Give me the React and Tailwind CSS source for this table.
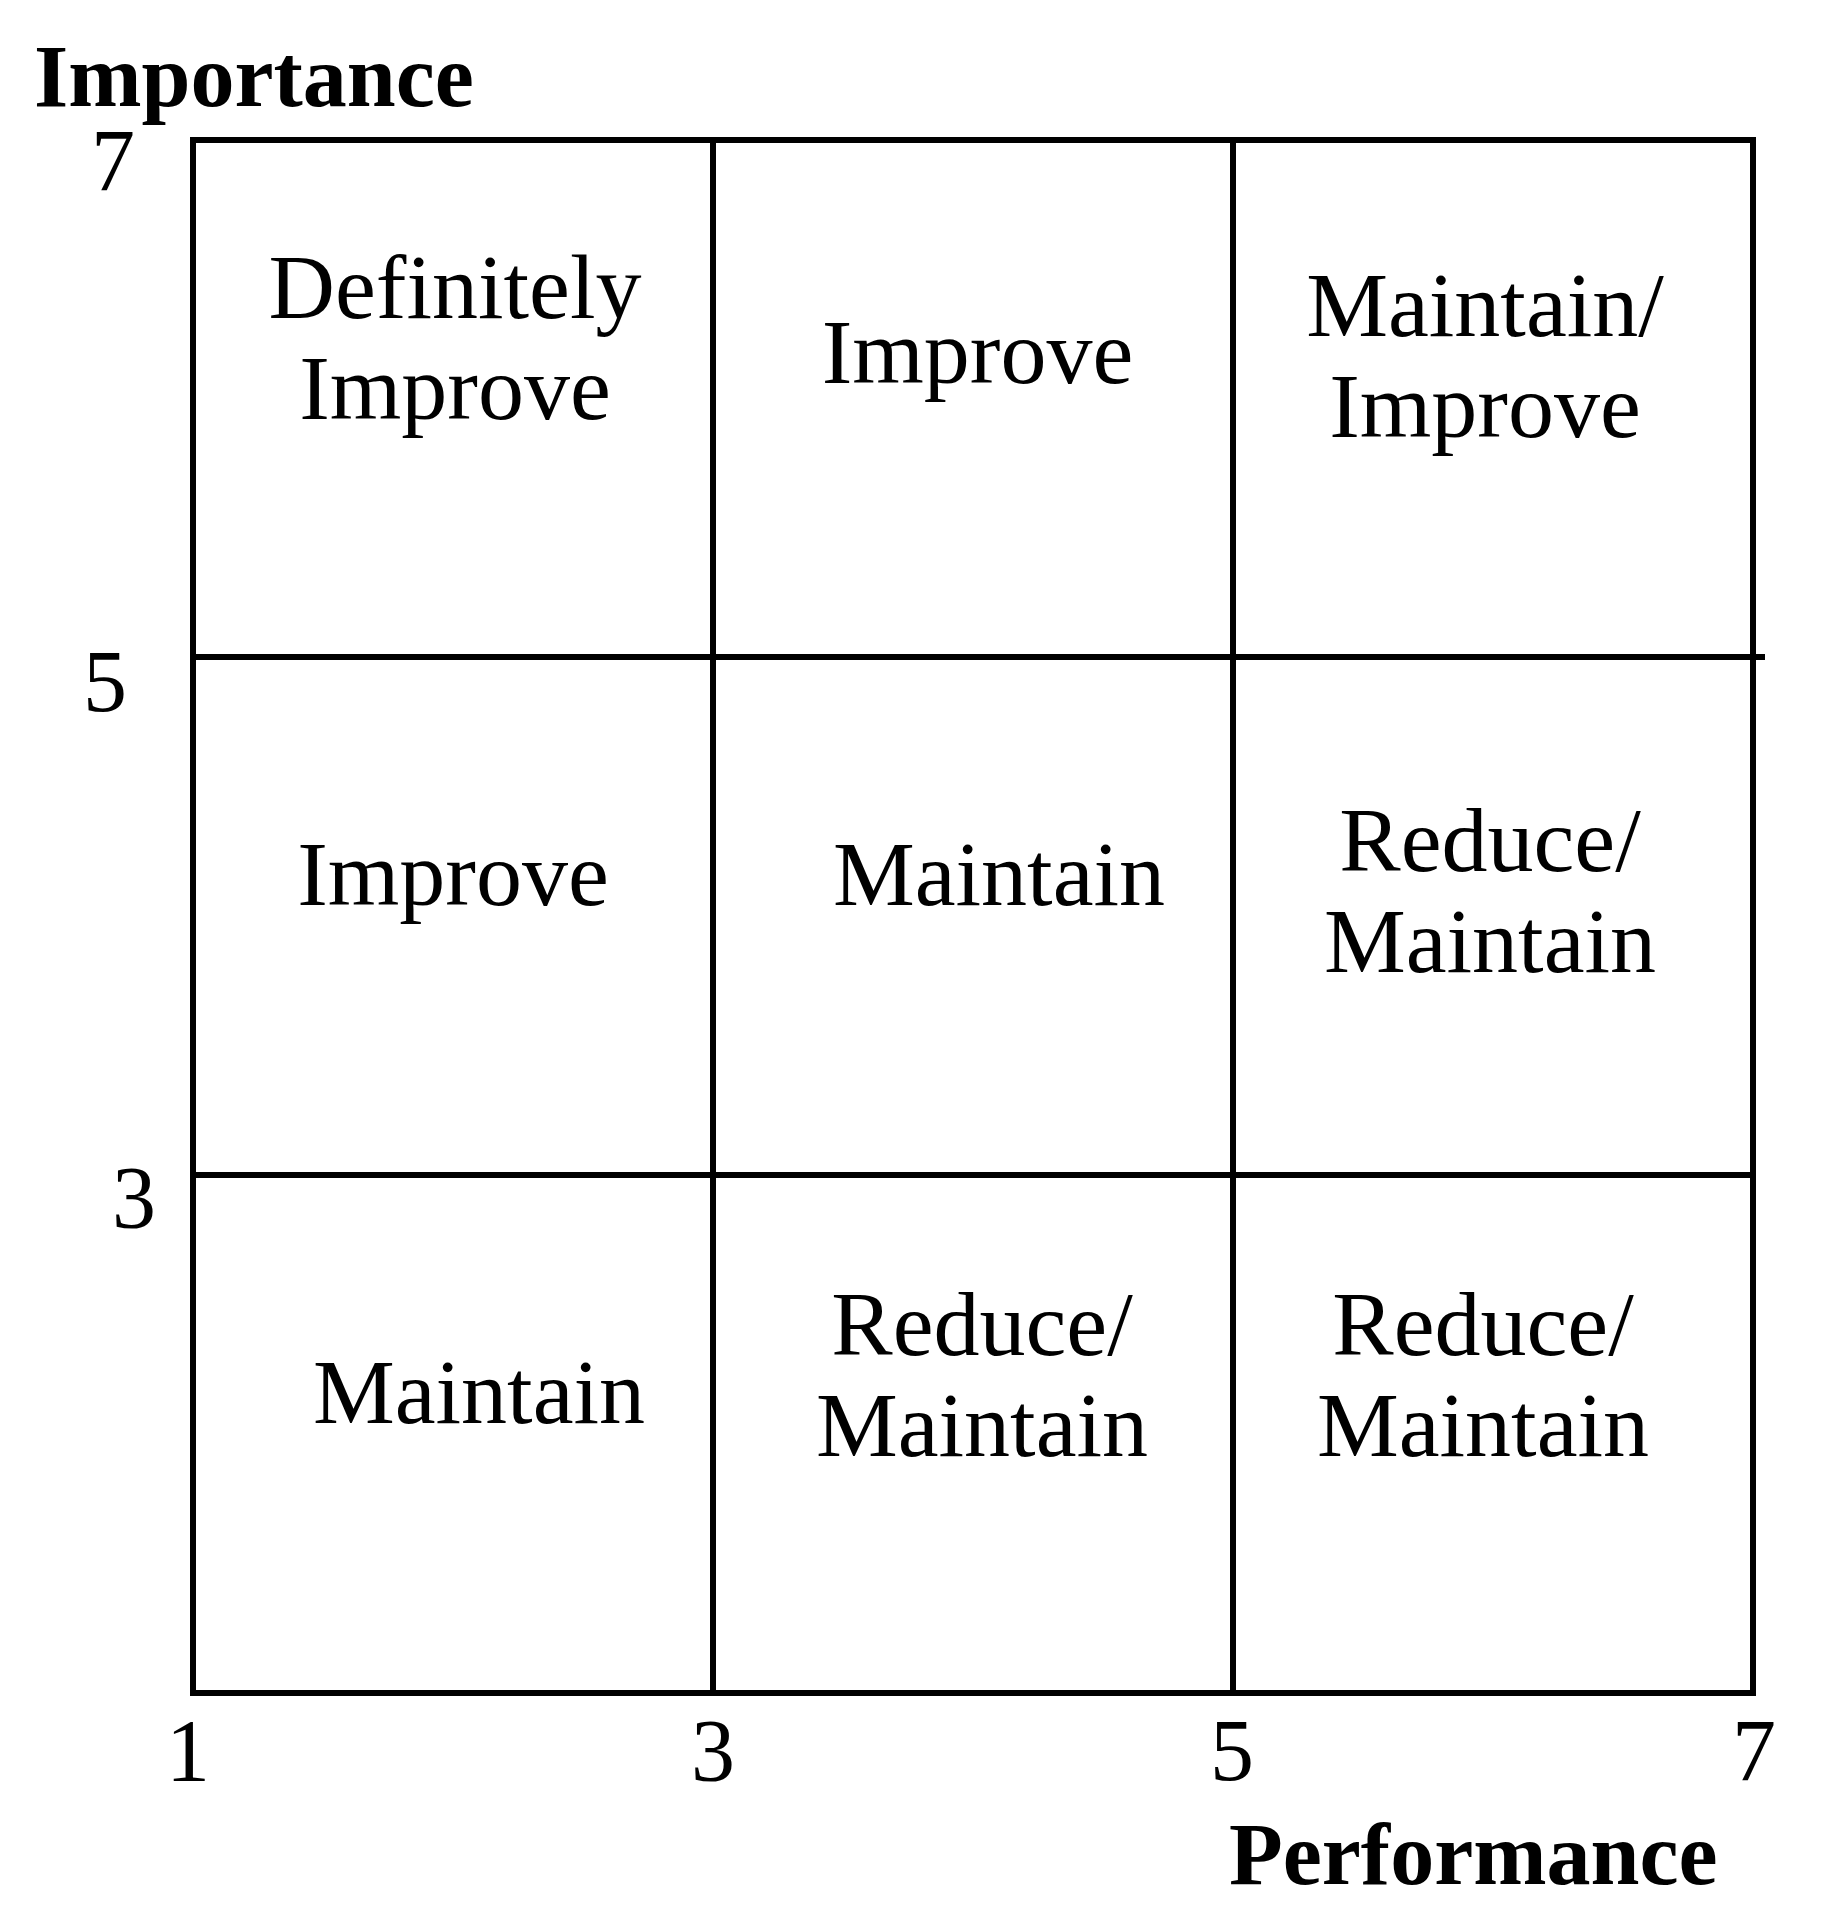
import React from "react";

const cells = [
  // top row (importance 5-7)
  { lines: ["Definitely", "Improve"], pad: "pt-[94px] pl-[4px]" },
  { lines: ["Improve"], pad: "pt-[159px] pl-[9px]" },
  { lines: ["Maintain/", "Improve"], pad: "pt-[112px] pr-[16px]" },
  // middle row (importance 3-5)
  { lines: ["Improve"], pad: "pt-[164px]" },
  { lines: ["Maintain"], pad: "pt-[164px] pl-[52px]" },
  { lines: ["Reduce/", "Maintain"], pad: "pt-[130px] pr-[6px]" },
  // bottom row (importance 1-3)
  { lines: ["Maintain"], pad: "pt-[164px] pl-[52px]" },
  { lines: ["Reduce/", "Maintain"], pad: "pt-[96px] pl-[18px]" },
  { lines: ["Reduce/", "Maintain"], pad: "pt-[96px] pr-[20px]" },
];

const yLabels = [
  { text: "7", row: "h-[517px]", cls: "pl-[91px] -mt-[8px]" },
  { text: "5", row: "h-[518px]", cls: "pl-[83px] -mt-[4px]" },
  { text: "3", row: "h-[518px]", cls: "pl-[112px] -mt-[6px]" },
];

function Cell({ lines, pad }) {
  return (
    <div className={`bg-white flex flex-col items-center ${pad}`}>
      {lines.map((l, i) => (
        <div key={i} className="text-[92px] leading-[101px] whitespace-nowrap text-center">
          {l}
        </div>
      ))}
    </div>
  );
}

export default function App() {
  return (
    <div className="w-[1824px] h-[1932px] bg-white text-black font-['Liberation_Serif',serif] pt-[33px]">
      {/* axis title */}
      <div className="pl-[34px] text-[88px] leading-[88px] h-[88px] font-bold">Importance</div>

      {/* y labels + matrix */}
      <div className="flex mt-[16px]">
        <div className="w-[190px] flex flex-col">
          {yLabels.map((y) => (
            <div key={y.text} className={y.row}>
              <div className={`text-[88px] leading-[64px] ${y.cls}`}>{y.text}</div>
            </div>
          ))}
        </div>
        <div className="relative">
          <div className="grid grid-cols-[514px_514px_514px] grid-rows-[511px_512px_512px] gap-[6px] p-[6px] bg-black">
            {cells.map((c, i) => (
              <Cell key={i} lines={c.lines} pad={c.pad} />
            ))}
          </div>
          {/* little overhang of the 5 line */}
          <span className="absolute left-full top-[517px] w-[9px] h-[6px] bg-black"></span>
        </div>
      </div>

      {/* x labels */}
      <div className="flex mt-[11px] text-[88px] leading-[88px]">
        <div className="ml-[166px] w-[44px] text-center">1</div>
        <div className="ml-[481px] w-[44px] text-center">3</div>
        <div className="ml-[475px] w-[44px] text-center">5</div>
        <div className="ml-[478px] w-[44px] text-center">7</div>
      </div>

      <div className="mt-[16px] pl-[1229px] text-[88px] leading-[88px] font-bold">Performance</div>
    </div>
  );
}
